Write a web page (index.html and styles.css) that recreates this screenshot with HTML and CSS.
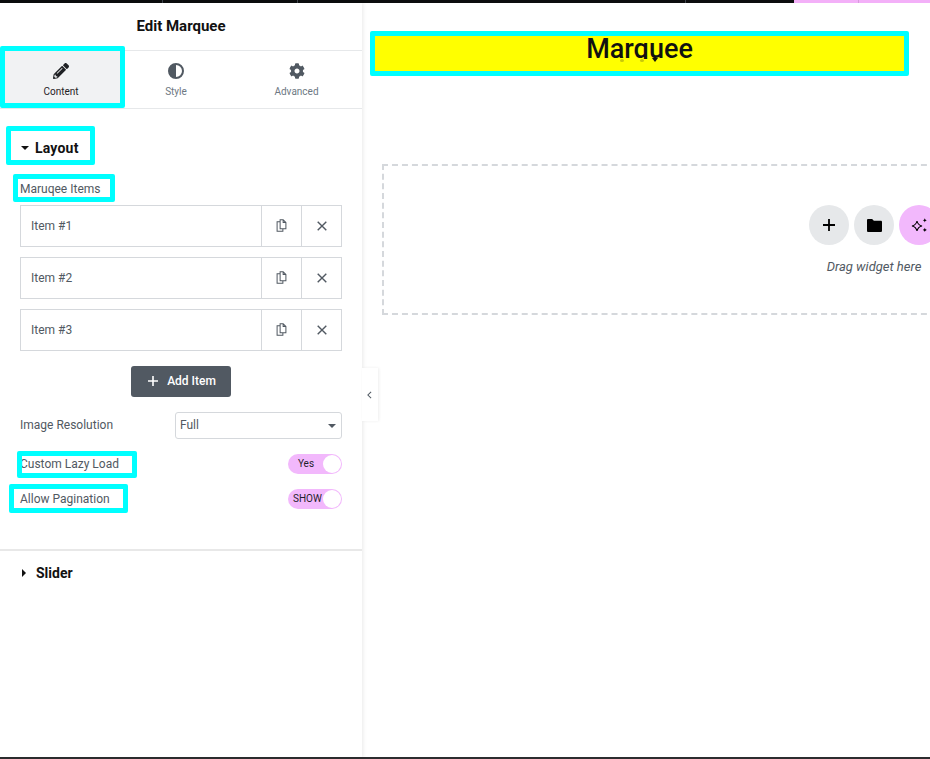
FILE: index.html
```html
<!DOCTYPE html>
<html lang="en">
<head>
  <meta charset="UTF-8">
  <title>Edit Marquee</title>
  <link rel="stylesheet" href="styles.css">
</head>
<body>

  <div class="topbar">
    <span class="seg seg-a"></span>
    <span class="seg seg-b"></span>
    <span class="seg seg-c"></span>
    <span class="seg seg-d"></span>
    <span class="seg seg-e"></span>
    <span class="seg seg-f"></span>
  </div>

  <div class="main">
    <aside class="panel">
      <h1 class="panel-title">Edit Marquee</h1>

      <div class="tabs">
        <div class="tab tab-active mark">
          <svg class="tab-icon" viewBox="0 0 512 512"><path fill="#1f2124" d="M497.9 142.1l-46.1 46.1c-4.7 4.7-12.3 4.7-17 0l-111-111c-4.7-4.7-4.7-12.3 0-17l46.1-46.1c18.7-18.7 49.1-18.7 67.9 0l60.1 60.1c18.8 18.7 18.8 49.1 0 67.9zM284.2 99.8L21.6 362.4.4 483.9c-2.9 16.4 11.4 30.6 27.8 27.8l121.5-21.3 262.6-262.6c4.7-4.7 4.7-12.3 0-17l-111-111c-4.8-4.7-12.4-4.7-17.1 0zM124.1 339.9c-5.5-5.5-5.5-14.3 0-19.8l154-154c5.5-5.5 14.3-5.5 19.8 0s5.5 14.3 0 19.8l-154 154c-5.5 5.5-14.3 5.5-19.8 0zM88 424h48v36.3l-64.5 11.3-31.1-31.1L51.7 376H88v48z"/></svg>
          <span>Content</span>
        </div>
        <div class="tab">
          <svg class="tab-icon" viewBox="0 0 16 16"><circle cx="8" cy="8" r="7" fill="none" stroke="#515962" stroke-width="2"/><path fill="#515962" d="M8 1a7 7 0 0 0 0 14z"/></svg>
          <span>Style</span>
        </div>
        <div class="tab tab-last">
          <svg class="tab-icon" viewBox="0 0 512 512"><path fill="#515962" d="M487.4 315.7l-42.6-24.6c4.3-23.2 4.3-47 0-70.2l42.6-24.6c4.9-2.8 7.1-8.6 5.5-14-11.1-35.6-30-67.8-54.7-94.6-3.8-4.1-10-5.1-14.8-2.3L380.8 110c-17.9-15.4-38.5-27.3-60.8-35.1V25.8c0-5.6-3.9-10.5-9.4-11.7-36.7-8.2-74.3-7.8-109.2 0-5.5 1.2-9.4 6.1-9.4 11.7V75c-22.2 7.9-42.8 19.8-60.8 35.1L88.7 85.5c-4.9-2.8-11-1.9-14.8 2.3-24.7 26.7-43.6 58.9-54.7 94.6-1.7 5.4.6 11.2 5.5 14L67.3 221c-4.3 23.2-4.3 47 0 70.2l-42.6 24.6c-4.9 2.8-7.1 8.6-5.5 14 11.1 35.6 30 67.8 54.7 94.6 3.8 4.1 10 5.1 14.8 2.3l42.6-24.6c17.9 15.4 38.5 27.3 60.8 35.1v49.2c0 5.6 3.9 10.5 9.4 11.7 36.7 8.2 74.3 7.8 109.2 0 5.5-1.2 9.4-6.1 9.4-11.7v-49.2c22.2-7.9 42.8-19.8 60.8-35.1l42.6 24.6c4.9 2.8 11 1.9 14.8-2.3 24.7-26.7 43.6-58.9 54.7-94.6 1.5-5.5-.7-11.3-5.6-14.1zM256 336c-44.1 0-80-35.9-80-80s35.9-80 80-80 80 35.9 80 80-35.9 80-80 80z"/></svg>
          <span>Advanced</span>
        </div>
      </div>

      <section class="section">
        <h2 class="section-head mark mark-layout"><i class="caret-down"></i>Layout</h2>
        <div class="label mark mark-items">Maruqee Items</div>

        <div class="items">
          <div class="item">
            <span class="item-name">Item #1</span>
            <span class="item-btn"><svg class="copy" viewBox="0 0 12 14"><path d="M4.500 .8h3.300l3 3v6.700h-6.300zM7.800 .8v3h3M4.500 3H1.200v10.200h6.300v-2.700"/></svg></span>
            <span class="item-btn"><svg class="close" viewBox="0 0 10 10"><path d="M.7 .7l8.600 8.600M9.300 .7L.7 9.300"/></svg></span>
          </div>
          <div class="item">
            <span class="item-name">Item #2</span>
            <span class="item-btn"><svg class="copy" viewBox="0 0 12 14"><path d="M4.500 .8h3.300l3 3v6.700h-6.300zM7.800 .8v3h3M4.500 3H1.200v10.200h6.300v-2.700"/></svg></span>
            <span class="item-btn"><svg class="close" viewBox="0 0 10 10"><path d="M.7 .7l8.600 8.600M9.300 .7L.7 9.300"/></svg></span>
          </div>
          <div class="item">
            <span class="item-name">Item #3</span>
            <span class="item-btn"><svg class="copy" viewBox="0 0 12 14"><path d="M4.500 .8h3.300l3 3v6.700h-6.300zM7.800 .8v3h3M4.500 3H1.200v10.200h6.300v-2.700"/></svg></span>
            <span class="item-btn"><svg class="close" viewBox="0 0 10 10"><path d="M.7 .7l8.600 8.600M9.300 .7L.7 9.300"/></svg></span>
          </div>
        </div>

        <button class="add-btn"><svg viewBox="0 0 10 10"><path d="M5 0v10M0 5h10"/></svg>Add Item</button>

        <div class="row row-select">
          <span class="label">Image Resolution</span>
          <div class="select">Full<i class="caret-down caret-grey"></i></div>
        </div>

        <div class="row row-switch">
          <span class="label mark mark-lazy">Custom Lazy Load</span>
          <div class="switch"><span class="switch-text">Yes</span><i class="knob"></i></div>
        </div>

        <div class="row row-switch">
          <span class="label mark mark-page">Allow Pagination</span>
          <div class="switch"><span class="switch-text switch-show">SHOW</span><i class="knob"></i></div>
        </div>
      </section>

      <h2 class="slider-head"><i class="caret-right"></i>Slider</h2>
    </aside>

    <div class="collapse">
      <svg viewBox="0 0 6 10"><path d="M5 1L1 5l4 4"/></svg>
    </div>

    <main class="canvas">
      <div class="marquee"><span class="marquee-text">Marquee</span></div>
      <div class="dropzone">
        <div class="drop-buttons">
          <span class="round"><svg class="plus" viewBox="0 0 12 12"><path d="M6 0v12M0 6h12"/></svg></span>
          <span class="round"><svg class="folder" viewBox="0 0 14 12"><path d="M0 1.200C0 .5 .5 0 1.200 0h3.600l1.600 1.600h6.400c.7 0 1.200 .5 1.200 1.200v8c0 .7-.5 1.200-1.200 1.200H1.200C.5 12 0 11.500 0 10.800z"/></svg></span>
          <span class="round round-ai"><svg class="sparkle" viewBox="0 0 16 16"><path class="star-big" d="M6 4c.6 2.600 2.400 4.400 5 5-2.600 .6-4.400 2.400-5 5-.6-2.600-2.400-4.400-5-5 2.600-.6 4.400-2.400 5-5z"/><path d="M13.800 1.200c.3 1.200 .9 1.800 2.100 2.100-1.200 .3-1.800 .9-2.100 2.100-.3-1.200-.9-1.800-2.100-2.100 1.200-.3 1.800-.9 2.100-2.100zM13.800 10.800c.3 1.200 .9 1.800 2.100 2.100-1.200 .3-1.800 .9-2.100 2.100-.3-1.200-.9-1.800-2.100-2.100 1.200-.3 1.800-.9 2.100-2.100z"/></svg></span>
        </div>
        <div class="drop-text">Drag widget here</div>
      </div>
    </main>
  </div>

  <div class="bottombar"></div>

</body>
</html>
```

FILE: styles.css
```css
* {
  box-sizing: border-box;
}
html, body {
  height: 100%;
}
body {
  margin: 0;
  display: flex;
  flex-direction: column;
  overflow: hidden;
  font-family: Roboto, "Liberation Sans", sans-serif;
  color: #515962;
  background: #fff;
}

/* strips at the page edges */
.topbar {
  display: flex;
  height: 3px;
  flex: none;
}
.seg {
  background: #0c0d0e;
  border-right: 1px solid #3f444b;
}
.seg-a { width: 163px; }
.seg-b { width: 135px; }
.seg-c { width: 388px; }
.seg-d {
  width: 108px;
  border: 0;
}
.seg-e {
  width: 65px;
  background: #f3b0f8;
  border-right-color: #d79bdc;
}
.seg-f {
  flex: 1;
  background: #f3b0f8;
  border: 0;
}
.bottombar {
  height: 2px;
  flex: none;
  background: #2c2d2f;
}
.main {
  display: flex;
  flex: 1;
  min-height: 0;
  position: relative;
}

/* cyan annotation boxes lying over the panel */
.mark {
  position: relative;
}
.mark::after {
  content: "";
  position: absolute;
  box-sizing: border-box;
  border: 5px solid #0ff;
  border-radius: 2px;
  pointer-events: none;
}
.tab-active::after {
  inset: -5px 0 0 0;
}
.mark-layout::after {
  inset: 0;
}
.mark-items::after {
  top: 0;
  left: -7px;
  width: 102px;
  height: 28px;
}
.mark-lazy::after {
  top: -6px;
  left: -3px;
  width: 120px;
  height: 27px;
}
.mark-page::after {
  top: -8px;
  left: -11px;
  width: 119px;
  height: 29px;
}

/* panel */
.panel {
  width: 362px;
  flex: none;
  box-shadow: 1px 0 4px rgba(0, 0, 0, .09);
}
.panel-title {
  margin: 0;
  height: 48px;
  padding-bottom: 1px;
  display: flex;
  align-items: center;
  justify-content: center;
  font-size: 15px;
  font-weight: 700;
  color: #111;
  border-bottom: 1px solid #e6e8ea;
}
.tabs {
  display: grid;
  grid-template-columns: 125px 102px 1fr;
  height: 58px;
  border-bottom: 1px solid #e6e8ea;
}
.tab {
  display: flex;
  flex-direction: column;
  align-items: center;
  padding-top: 12px;
  font-size: 10px;
  color: #6d7882;
}
.tab-last {
  padding-left: 4px;
}
.tab-active {
  padding-right: 3px;
  color: #1f2124;
  background: linear-gradient(#f1f2f3, #f1f2f3) no-repeat 5px 0 / 115px 52px;
}
.tab-icon {
  width: 16px;
  height: 16px;
  margin-bottom: 7px;
}

.section {
  padding-top: 17px;
  height: 442px;
  border-bottom: 2px solid #e8e8e8;
}
.section-head {
  margin: 0 0 0 6px;
  width: 89px;
  height: 39px;
  display: flex;
  align-items: center;
  padding: 4px 0 0 15px;
  font-size: 14px;
  font-weight: 700;
  letter-spacing: .2px;
  color: #111;
}
.caret-down {
  width: 0;
  height: 0;
  margin-right: 6px;
  border: 4px solid transparent;
  border-top-color: #111;
  border-bottom: 0;
}
.caret-right {
  width: 0;
  height: 0;
  margin-right: 10px;
  border: 4px solid transparent;
  border-left-color: #111;
  border-right: 0;
}
.label {
  font-size: 12px;
  color: #515962;
}
.section > .label {
  display: block;
  margin: 9px 0 0 20px;
  height: 28px;
  padding-top: 8px;
  line-height: 14px;
}

/* repeater */
.items {
  margin: 3px 20px 0;
  display: flex;
  flex-direction: column;
  gap: 10px;
}
.item {
  display: flex;
  height: 42px;
  border: 1px solid #d5d8dc;
  font-size: 12px;
}
.item-name {
  flex: 1;
  padding: 13px 0 0 10px;
  line-height: 14px;
}
.item-btn {
  width: 40px;
  display: flex;
  align-items: center;
  justify-content: center;
  border-left: 1px solid #d5d8dc;
}
.copy {
  width: 11px;
  height: 13px;
  margin-bottom: 2px;
  fill: none;
  stroke: #515962;
  stroke-width: 1.1;
}
.close {
  width: 10px;
  height: 10px;
  fill: none;
  stroke: #515962;
  stroke-width: 1.4;
}
.add-btn {
  display: flex;
  align-items: center;
  justify-content: center;
  gap: 9px;
  width: 100px;
  height: 31px;
  margin: 15px 0 0 131px;
  padding: 0 0 1px 2px;
  border: 0;
  border-radius: 3px;
  background: #515962;
  color: #fff;
  font-family: inherit;
  font-size: 12px;
  font-weight: 500;
}
.add-btn svg {
  width: 10px;
  height: 10px;
  fill: none;
  stroke: #fff;
  stroke-width: 1.6;
}

/* controls */
.row {
  display: flex;
  align-items: center;
  justify-content: space-between;
  margin: 0 20px;
}
.row-select {
  height: 27px;
  margin-top: 15px;
}
.row-select .label {
  padding-bottom: 2px;
}
.row-switch {
  height: 20px;
  margin-top: 15px;
}
.select {
  display: flex;
  align-items: center;
  justify-content: space-between;
  width: 167px;
  height: 27px;
  padding: 0 5px 2px 4px;
  border: 1px solid #d5d8dc;
  border-radius: 3px;
  font-size: 12px;
}
.caret-grey {
  margin: 2px 0 0;
  border-width: 4px 4px 0;
  border-top-color: #515962;
}
.switch {
  position: relative;
  width: 54px;
  height: 20px;
  border-radius: 10px;
  background: #f2b8fc;
  font-size: 10px;
  line-height: 20px;
  color: #1f1f2b;
}
.switch-text {
  display: block;
  width: 36px;
  text-align: center;
}
.switch-show {
  width: auto;
  padding-left: 5px;
  text-align: left;
}
.knob {
  position: absolute;
  top: 1px;
  right: 1px;
  width: 18px;
  height: 18px;
  border-radius: 50%;
  background: #fff;
}

.slider-head {
  margin: 0;
  height: 44px;
  display: flex;
  align-items: center;
  padding-left: 22px;
  font-size: 14px;
  font-weight: 700;
  color: #111;
}

/* tab that hides the panel, sits on the panel edge */
.collapse {
  position: absolute;
  left: 362px;
  top: 365px;
  width: 16px;
  height: 53px;
  display: flex;
  align-items: center;
  justify-content: center;
  background: #fff;
  box-shadow: 1px 0 3px rgba(0, 0, 0, .07);
}
.collapse svg {
  width: 5px;
  height: 8px;
  margin-right: 2px;
  fill: none;
  stroke: #515962;
  stroke-width: 1.3;
}

/* canvas */
.canvas {
  flex: 1;
  min-width: 0;
  overflow: hidden;
  padding-top: 28px;
}
.marquee {
  position: relative;
  width: 539px;
  height: 45px;
  display: flex;
  justify-content: center;
  margin-left: 8px;
  border: 5px solid #0ff;
  border-radius: 2px;
  background: #ff0;
  font-size: 27px;
  font-weight: 500;
  color: #111;
}
.marquee-text {
  position: relative;
  display: block;
  height: 32px;
  margin-top: -3px;
  line-height: 32px;
}
/* a yellow strip lies over the descender, only traces of it show */
.marquee-text::before {
  content: "";
  position: absolute;
  left: 0;
  right: 0;
  top: 26px;
  height: 8px;
  background: #ff0;
}
.marquee-text::after {
  content: "";
  position: absolute;
  left: 66px;
  top: 25px;
  border: 3px solid transparent;
  border-top: 4px solid #111;
  border-bottom: 0;
}
.marquee::after {
  content: "";
  position: absolute;
  left: 245px;
  top: 23px;
  width: 4px;
  height: 3px;
  border-radius: 50%;
  background: #c8c80a;
  box-shadow: 20px 0 #c8c80a;
}
.dropzone {
  width: 984px;
  height: 151px;
  margin: 88px 0 0 20px;
  padding-top: 39px;
  border: 2px dashed #d5d8dc;
  text-align: center;
}
.drop-buttons {
  display: flex;
  justify-content: center;
  gap: 5px;
}
.round {
  width: 40px;
  height: 40px;
  display: flex;
  align-items: center;
  justify-content: center;
  border-radius: 50%;
  background: #e6e8ea;
}
.round-ai {
  background: #f2b8fc;
}
.plus {
  width: 12px;
  height: 12px;
  fill: none;
  stroke: #000;
  stroke-width: 1.8;
}
.folder {
  width: 15px;
  height: 13px;
}
.sparkle {
  width: 16px;
  height: 16px;
}
.star-big {
  fill: none;
  stroke: #000;
  stroke-width: 1.1;
}
.drop-text {
  margin-top: 15px;
  font-size: 13px;
  font-style: italic;
  line-height: 14px;
  color: #515962;
}
```
